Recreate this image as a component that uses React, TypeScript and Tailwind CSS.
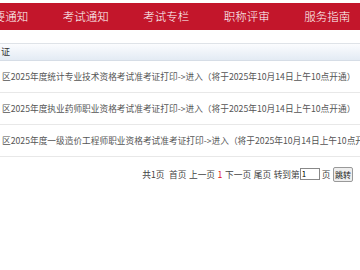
import React from 'react';

const navItems = ['重要通知', '考试通知', '考试专栏', '职称评审', '服务指南'];

const rows = [
    '区2025年度统计专业技术资格考试准考证打印->进入（将于2025年10月14日上午10点开通）',
    '区2025年度执业药师职业资格考试准考证打印->进入（将于2025年10月14日上午10点开通）',
    '区2025年度一级造价工程师职业资格考试准考证打印->进入（将于2025年10月14日上午10点开通）',
];

export default function App() {
    return (
        <main
            className="w-[360px] h-[270px] overflow-hidden bg-white"
            style={{ fontFamily: '"Noto Sans CJK SC", "Noto Sans", sans-serif' }}
        >
            {/* nav bar */}
            <nav className="mt-[3px] h-[27px] bg-[#c3162b] flex items-center overflow-hidden">
                <div className="flex -ml-[35px] shrink-0">
                    {navItems.map((item) => (
                        <a
                            key={item}
                            className="w-[80.5px] shrink-0 text-center text-[11.5px] font-light text-white leading-none"
                        >
                            {item}
                        </a>
                    ))}
                </div>
            </nav>

            {/* panel */}
            <section className="mt-[13px] border-t border-[#dfe3e8]">
                <div className="h-[17px] bg-gradient-to-b from-[#fbfcfe] to-[#e3ebf4] border-b border-[#d6dde6] flex items-center pl-[1px] text-[9px] text-[#333]">
                    证
                </div>

                <ul>
                    {rows.map((row) => (
                        <li
                            key={row}
                            className="h-[32px] flex items-center border-b border-[#e8e8e8] pl-[2px] whitespace-nowrap overflow-hidden text-[8.7px] text-[#555]"
                        >
                            {row}
                        </li>
                    ))}
                </ul>

                {/* pagination */}
                <div className="mt-[10px] pr-[7px] flex justify-end items-center gap-[2.6px] text-[8.7px] text-[#444] whitespace-nowrap">
                    <span>共1页</span>
                    <span className="ml-[2px]">首页</span>
                    <span>上一页</span>
                    <span className="text-[#e0141e]">1</span>
                    <span>下一页</span>
                    <span>尾页</span>
                    <span className="flex items-center">
                        转到第
                        <input
                            defaultValue="1"
                            className="w-[20px] h-[12px] border border-[#888] px-[1px] text-[8px] text-black outline-none"
                        />
                        <span className="ml-[2px]">页</span>
                    </span>
                    <button className="h-[15px] px-[1px] border border-[#999] bg-[#eee] rounded-[2px] text-[8px] text-[#222] leading-none">
                        跳转
                    </button>
                </div>
            </section>
        </main>
    );
}
